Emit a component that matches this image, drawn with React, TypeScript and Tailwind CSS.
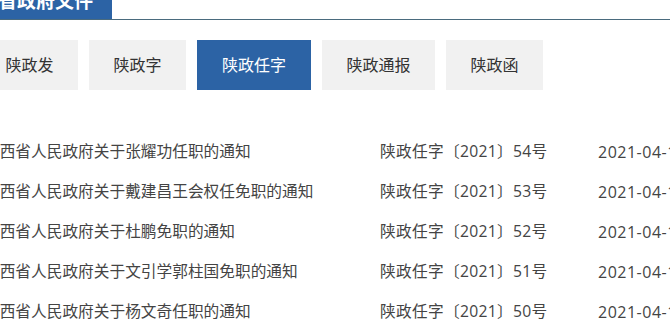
const tabs = [
    { label: '陕政发', w: 'w-[97px]' },
    { label: '陕政字', w: 'w-[97px]' },
    { label: '陕政任字', w: 'w-[114px]', active: true },
    { label: '陕政通报', w: 'w-[113px]' },
    { label: '陕政函', w: 'w-[97px]' },
];

const docs = [
    { title: '陕西省人民政府关于张耀功任职的通知', no: '陕政任字〔2021〕54号', date: '2021-04-16' },
    { title: '陕西省人民政府关于戴建昌王会权任免职的通知', no: '陕政任字〔2021〕53号', date: '2021-04-16' },
    { title: '陕西省人民政府关于杜鹏免职的通知', no: '陕政任字〔2021〕52号', date: '2021-04-16' },
    { title: '陕西省人民政府关于文引学郭柱国免职的通知', no: '陕政任字〔2021〕51号', date: '2021-04-16' },
    { title: '陕西省人民政府关于杨文奇任职的通知', no: '陕政任字〔2021〕50号', date: '2021-04-16' },
];

export default function App() {
    return (
        <div
            className="h-[323px] w-[670px] overflow-hidden bg-white"
            style={{ fontFamily: '"Open Sans", "Noto Sans CJK SC", sans-serif' }}
        >
            <div className="flex h-[20px] items-end border-b border-[#4a6b7e]">
                <div className="ml-[-59px] mt-[-11px] h-[31px] shrink-0 whitespace-nowrap bg-[#2c63a5] px-[19px] text-[19px] font-bold leading-[26px] text-white">
                    陕西省政府文件
                </div>
            </div>

            <div className="ml-[-19px] mt-[20px] flex gap-[11px]">
                {tabs.map((t) => (
                    <div
                        key={t.label}
                        className={`flex h-[50px] shrink-0 items-center justify-center text-[16px] ${t.w} ${
                            t.active ? 'bg-[#2c63a5] text-white' : 'bg-[#f1f1f1] text-[#333]'
                        }`}
                    >
                        {t.label}
                    </div>
                ))}
            </div>

            <div className="ml-[-16px] mt-[42px] flex flex-col text-[15.7px] text-[#444]">
                {docs.map((d) => (
                    <div key={d.no} className="flex h-[40px] items-center whitespace-nowrap">
                        <span className="w-[396px] shrink-0">{d.title}</span>
                        <span className="w-[218px] shrink-0 tracking-[0.3px]">{d.no}</span>
                        <span className="shrink-0 text-[16px] tracking-[0.5px]">{d.date}</span>
                    </div>
                ))}
            </div>
        </div>
    );
}
